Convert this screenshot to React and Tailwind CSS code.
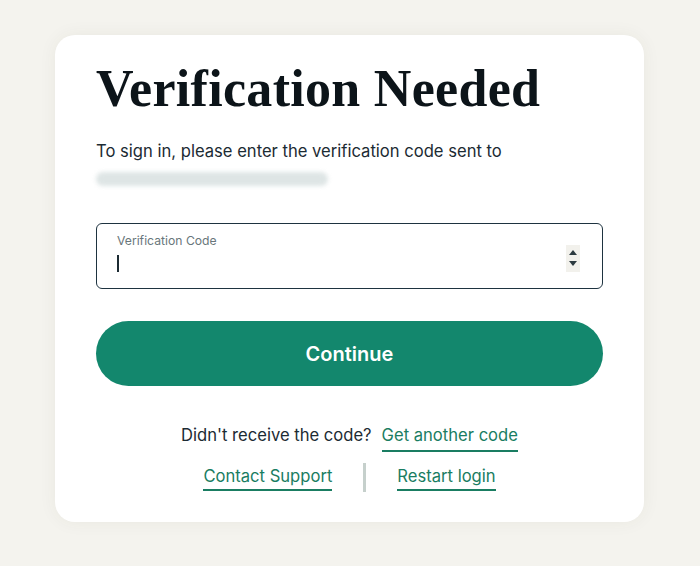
import { useState } from "react";

export default function App() {
  const [code, setCode] = useState("");

  return (
    <div
      className="min-h-screen bg-[#f4f3ee] pt-[35px] pb-[44px]"
      style={{ fontFamily: "Inter, 'Noto Sans', sans-serif" }}
    >
      {/* Card */}
      <div className="mx-[55px] w-[589px] h-[487px] bg-white rounded-[20px] shadow-[0_0_18px_rgba(60,60,40,0.06)] px-[41px] pt-[28px]">
        <h1
          className="text-[52px] leading-none font-bold text-[#0c1419] tracking-[0.3px]"
          style={{ fontFamily: "'Liberation Serif', serif" }}
        >
          Verification Needed
        </h1>

        <p className="mt-[24px] text-[16.6px] leading-[24px] text-[#1c2b33]">
          To sign in, please enter the verification code sent to
        </p>
        {/* blurred email */}
        <div className="mt-[9px] h-[14px] w-[232px] rounded-full bg-[#d6dfdf] blur-[2px] opacity-80" />

        {/* Input */}
        <label className="mt-[37px] flex h-[66px] items-center rounded-[6px] border border-[#1e3340] pl-[20px] pr-[22px]">
          <div className="flex-1 flex flex-col">
            <span className="text-[12.2px] leading-[14px] text-[#69767b] -mt-[6px]">
              Verification Code
            </span>
            <div className="mt-[7px] flex items-center h-[18px]">
              <span className="w-[2px] h-[17px] bg-[#1c2b33]" />
              <input
                type="text"
                value={code}
                onChange={(e) => setCode(e.target.value)}
                className="flex-1 outline-none text-[16px] bg-transparent"
              />
            </div>
          </div>
          <div className="flex flex-col items-center justify-center gap-[6px] w-[14px] h-[27px] bg-[#f2f1ec] mt-[4px]">
            <svg width="8" height="5" viewBox="0 0 8 5">
              <path d="M4 0 L8 5 L0 5 Z" fill="#2c3a40" />
            </svg>
            <svg width="8" height="5" viewBox="0 0 8 5">
              <path d="M0 0 L8 0 L4 5 Z" fill="#2c3a40" />
            </svg>
          </div>
        </label>

        {/* Button */}
        <button className="mt-[32px] w-full h-[65px] rounded-full bg-[#13876d] text-white text-[20px] font-semibold">
          Continue
        </button>

        {/* Links */}
        <div className="mt-[37px] flex justify-center items-start gap-[10px] text-[16.6px] leading-[24px]">
          <span className="text-[#1c2b33]">Didn't receive the code?</span>
          <a className="text-[#1a7d62] border-b-2 border-[#1a7d62] pb-[3px] cursor-pointer">
            Get another code
          </a>
        </div>
        <div className="mt-[11px] flex justify-center items-center gap-[31px] text-[16.6px] leading-[24px]">
          <a className="text-[#1a7d62] border-b-2 border-[#1a7d62] pb-[1px] cursor-pointer">
            Contact Support
          </a>
          <span className="w-[3px] h-[29px] bg-[#c6d0cc]" />
          <a className="text-[#1a7d62] border-b-2 border-[#1a7d62] pb-[1px] cursor-pointer">
            Restart login
          </a>
        </div>
      </div>
    </div>
  );
}
